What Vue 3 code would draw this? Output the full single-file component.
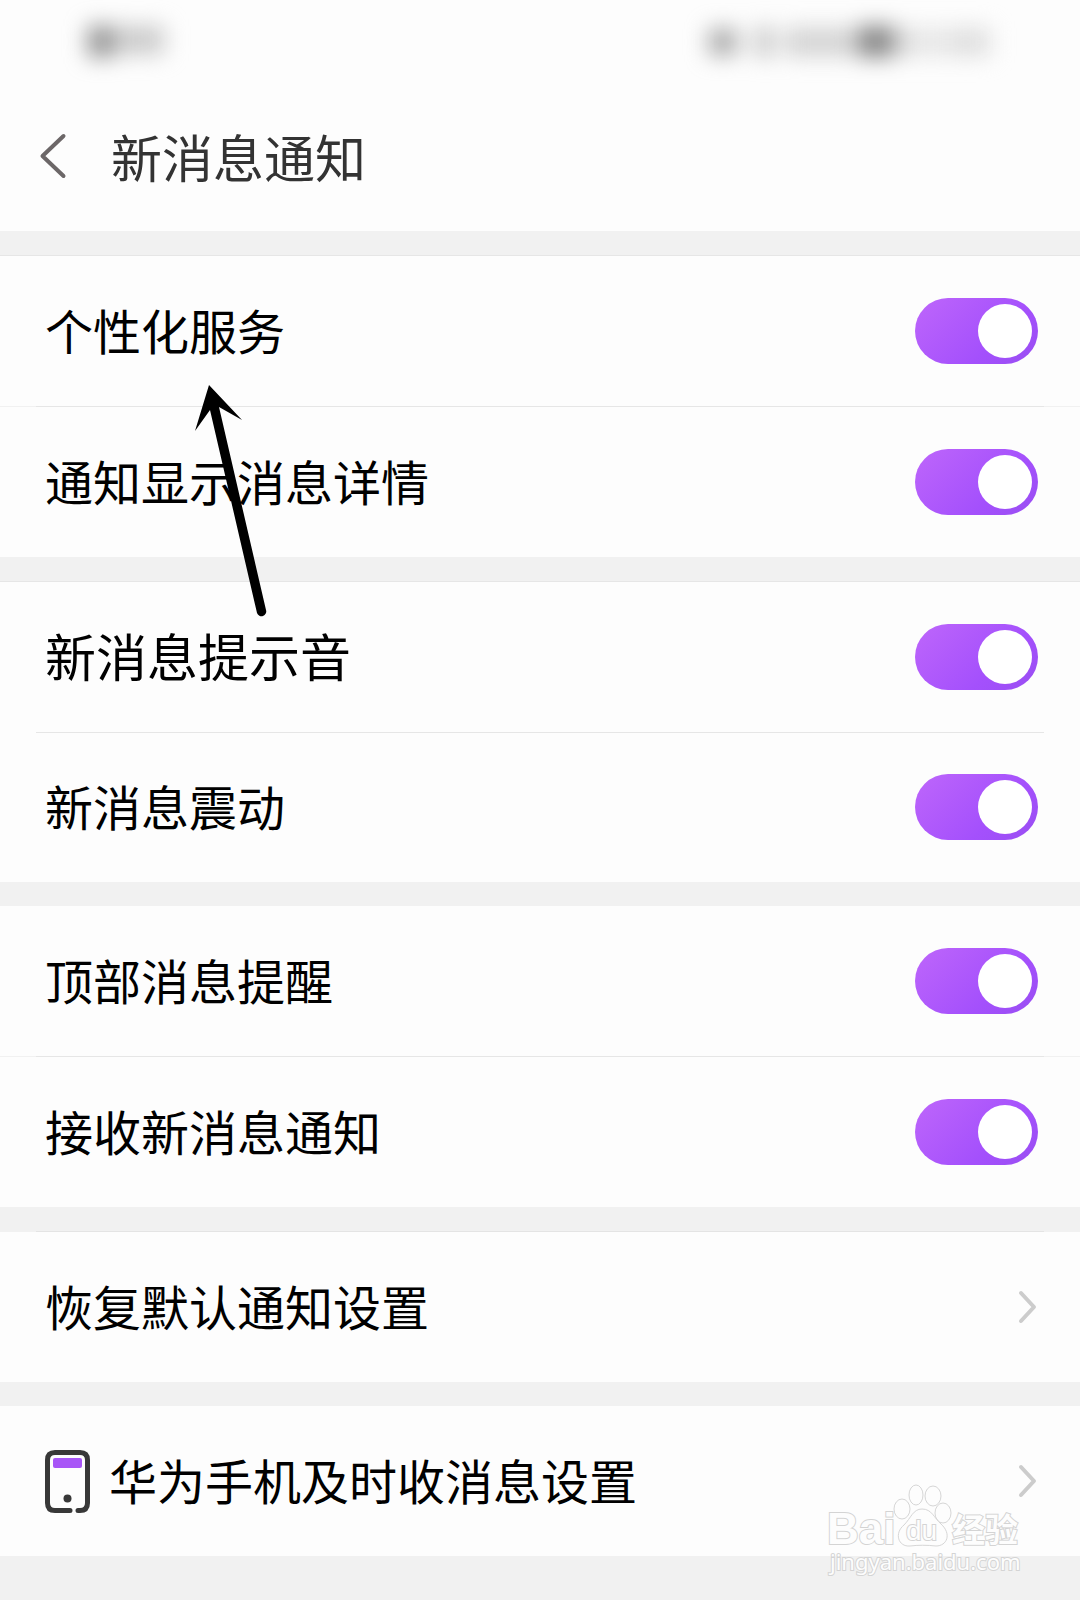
<template>
  <div class="page">
    <!-- 状态栏 -->
    <div class="status-bar">
      <svg class="status-left" width="160" height="84" viewBox="0 0 160 84">
        <g class="status-blur">
          <rect x="40" y="26" width="26" height="31" fill="#909090" />
          <rect x="68" y="26" width="48" height="28" fill="#c9c9c9" />
        </g>
      </svg>
      <svg class="status-right" width="380" height="84" viewBox="0 0 380 84">
        <g class="status-blur">
          <rect x="33" y="29" width="28" height="26" fill="#a6a6a6" />
          <rect x="80" y="27" width="16" height="30" fill="#bebebe" />
          <rect x="108" y="28" width="72" height="28" fill="#d2d2d2" />
          <rect x="182" y="26" width="36" height="31" fill="#848484" />
          <rect x="220" y="28" width="18" height="28" fill="#d8d8d8" />
          <rect x="240" y="28" width="30" height="28" fill="#e6e6e6" />
          <rect x="272" y="28" width="42" height="28" fill="#dedede" />
        </g>
      </svg>
    </div>

    <!-- 标题栏 -->
    <header class="header">
      <button class="back-button" aria-label="返回">
        <svg width="28" height="48" viewBox="0 0 28 48">
          <path d="M24.500 4L3.500 24L24.500 44" />
        </svg>
      </button>
      <h1>新消息通知</h1>
    </header>

    <!-- 开关列表 -->
    <section
      v-for="(group, index) in groups"
      :key="index"
      class="group"
      :class="{ 'top-line': group.topLine }"
    >
      <label
        v-for="item in group.items"
        :key="item.label"
        class="row"
        :class="{ large: item.large, wide: group.wide }"
      >
        <span class="row-text">{{ item.label }}</span>
        <input v-model="item.enabled" type="checkbox" class="switch" />
      </label>

      <!-- 指示箭头 -->
      <svg v-if="index === 0" class="pointer" width="80" height="240" viewBox="0 0 80 240">
        <path d="M19 0L52 35L29 22L76 225A4.700 4.700 0 0 1 67 228L20 25L5 46Z" />
      </svg>
    </section>

    <!-- 跳转项 -->
    <section class="group inset-line">
      <button class="row">
        <span class="row-text">恢复默认通知设置</span>
        <svg class="chevron" width="20" height="34" viewBox="0 0 20 34">
          <path d="M3 3L16 17L3 31" />
        </svg>
      </button>
    </section>

    <section class="group">
      <button class="row">
        <svg class="phone-icon" width="45" height="63" viewBox="0 0 45 63">
          <path
            d="M25 60.500H10Q2.500 60.500 2.500 53V10Q2.500 2.500 10 2.500H35Q42.500 2.500 42.500 10V53Q42.500 60.500 35 60.500H33"
            fill="none"
            stroke="#383838"
            stroke-width="5"
            stroke-linecap="round"
          />
          <rect x="8" y="8" width="29" height="10" rx="2" fill="#a855f7" />
          <circle cx="22.500" cy="48.500" r="4" fill="#383838" />
        </svg>
        <span class="row-text">华为手机及时收消息设置</span>
        <svg class="chevron" width="20" height="34" viewBox="0 0 20 34">
          <path d="M3 3L16 17L3 31" />
        </svg>
      </button>
    </section>

    <!-- 水印 -->
    <svg class="watermark" width="204" height="104" viewBox="0 0 204 104">
      <g class="mark-shape">
        <ellipse cx="82" cy="26" rx="8" ry="10" />
        <ellipse cx="96" cy="12" rx="7" ry="10" />
        <ellipse cx="113" cy="13" rx="8" ry="10" />
        <ellipse cx="123" cy="30" rx="8" ry="10" />
        <path d="M102 26C112 26 114 35 121 41C132 51 127 63 116 63C107 62 98 62 90 63C78 64 74 50 84 42C91 35 93 26 102 26Z" />
      </g>
      <text class="mark-latin" x="7" y="61">Bai</text>
      <text class="mark-du" x="86" y="57">du</text>
      <text class="mark-cjk" x="132" y="59">经验</text>
      <text class="mark-url" x="10" y="87">jingyan.baidu.com</text>
    </svg>
  </div>
</template>

<script setup>
import { ref } from 'vue'

// 通知开关分组
const groups = ref([
  {
    topLine: true,
    wide: true,
    items: [
      { label: '个性化服务', enabled: true },
      { label: '通知显示消息详情', enabled: true }
    ]
  },
  {
    topLine: true,
    wide: false,
    items: [
      { label: '新消息提示音', enabled: true, large: true },
      { label: '新消息震动', enabled: true }
    ]
  },
  {
    topLine: false,
    wide: true,
    items: [
      { label: '顶部消息提醒', enabled: true },
      { label: '接收新消息通知', enabled: true }
    ]
  }
])
</script>

<style>
body {
  margin: 0;
  background-color: #f1f1f1;
}
</style>

<style scoped>
.page {
  position: relative;
  min-height: 100vh;
  background-color: #f1f1f1;
  color: #000000;
  font-family: "Noto Sans CJK SC", sans-serif;
  overflow: hidden;
}

.status-bar {
  display: flex;
  justify-content: space-between;
  height: 84px;
  padding: 0 24px 0 48px;
  background-color: #fdfdfd;
}

.status-blur {
  filter: blur(11px);
}

.header {
  display: flex;
  align-items: center;
  gap: 44px;
  height: 147px;
  padding: 0 39px 4px;
  box-sizing: border-box;
  background-color: #fdfdfd;
}

.header h1 {
  margin: 0;
  color: #333333;
  font-size: 51px;
  font-weight: 400;
  line-height: 72px;
}

.back-button {
  display: flex;
  padding: 0;
  border: none;
  background: none;
  cursor: pointer;
}

.back-button path {
  fill: none;
  stroke: #6c6768;
  stroke-width: 4;
  stroke-linecap: round;
  stroke-linejoin: round;
}

.group {
  position: relative;
  margin-top: 24px;
  background-color: #fdfdfd;
}

.top-line {
  border-top: 1px solid #e6e6e6;
}

.inset-line::before {
  content: "";
  display: block;
  height: 1px;
  background: linear-gradient(#e4e4e4, #e4e4e4) center / calc(100% - 72px) 1px no-repeat #f1f1f1;
}

.row {
  display: flex;
  align-items: center;
  gap: 19px;
  width: 100%;
  height: 150px;
  padding: 0 42px 0 45px;
  box-sizing: border-box;
  border: none;
  background: none;
  color: inherit;
  font-family: inherit;
  font-size: 48px;
  line-height: 72px;
  text-align: left;
  cursor: pointer;
}

.row + .row {
  background: linear-gradient(#e6e6e6, #e6e6e6) top / calc(100% - 72px) 1px no-repeat;
}

.row.wide + .row.wide {
  height: 151px;
  padding-top: 1px;
  background:
    linear-gradient(#e6e6e6, #e6e6e6) top / calc(100% - 72px) 1px no-repeat,
    linear-gradient(#f1f1f1, #f1f1f1) top / 100% 1px no-repeat;
}

.row.large {
  font-size: 51px;
}

.row-text {
  flex: 1;
  padding-bottom: 4px;
}

.switch {
  appearance: none;
  display: flex;
  justify-content: flex-end;
  align-items: center;
  flex-shrink: 0;
  width: 123px;
  height: 66px;
  margin: 0;
  padding: 0 6px;
  box-sizing: border-box;
  border-radius: 33px;
  background: #d8d8d8;
  cursor: pointer;
}

.switch::before {
  content: "";
  width: 54px;
  height: 54px;
  border-radius: 50%;
  background-color: #ffffff;
}

.switch:checked {
  background: linear-gradient(135deg, #be66fb 0%, #a450fc 65%, #994ef2 100%);
}

.switch:not(:checked) {
  justify-content: flex-start;
}

.chevron {
  flex-shrink: 0;
}

.chevron path {
  fill: none;
  stroke: #cccccc;
  stroke-width: 4;
  stroke-linecap: round;
  stroke-linejoin: round;
}

.phone-icon {
  flex-shrink: 0;
}

/* 箭头跨越两组内容，盖在文字上方 */
.pointer {
  position: absolute;
  top: 129px;
  left: 190px;
  z-index: 2;
  pointer-events: none;
}

.watermark {
  position: absolute;
  right: 56px;
  bottom: 13px;
  pointer-events: none;
}

.mark-shape {
  fill: #fdfdfd;
  stroke: #d6d6d6;
  stroke-width: 1;
}

.watermark text {
  fill: #fdfdfd;
  stroke: #d4d4d4;
  stroke-width: 2;
  paint-order: stroke;
}

.watermark .mark-latin {
  font-family: "Liberation Sans", sans-serif;
  font-size: 44px;
  font-weight: 700;
}

.watermark .mark-du {
  font-family: "Liberation Sans", sans-serif;
  font-size: 28px;
}

.watermark .mark-cjk {
  font-size: 33px;
  font-weight: 700;
}

.watermark .mark-url {
  font-family: "Noto Sans", sans-serif;
  font-size: 22px;
}
</style>
